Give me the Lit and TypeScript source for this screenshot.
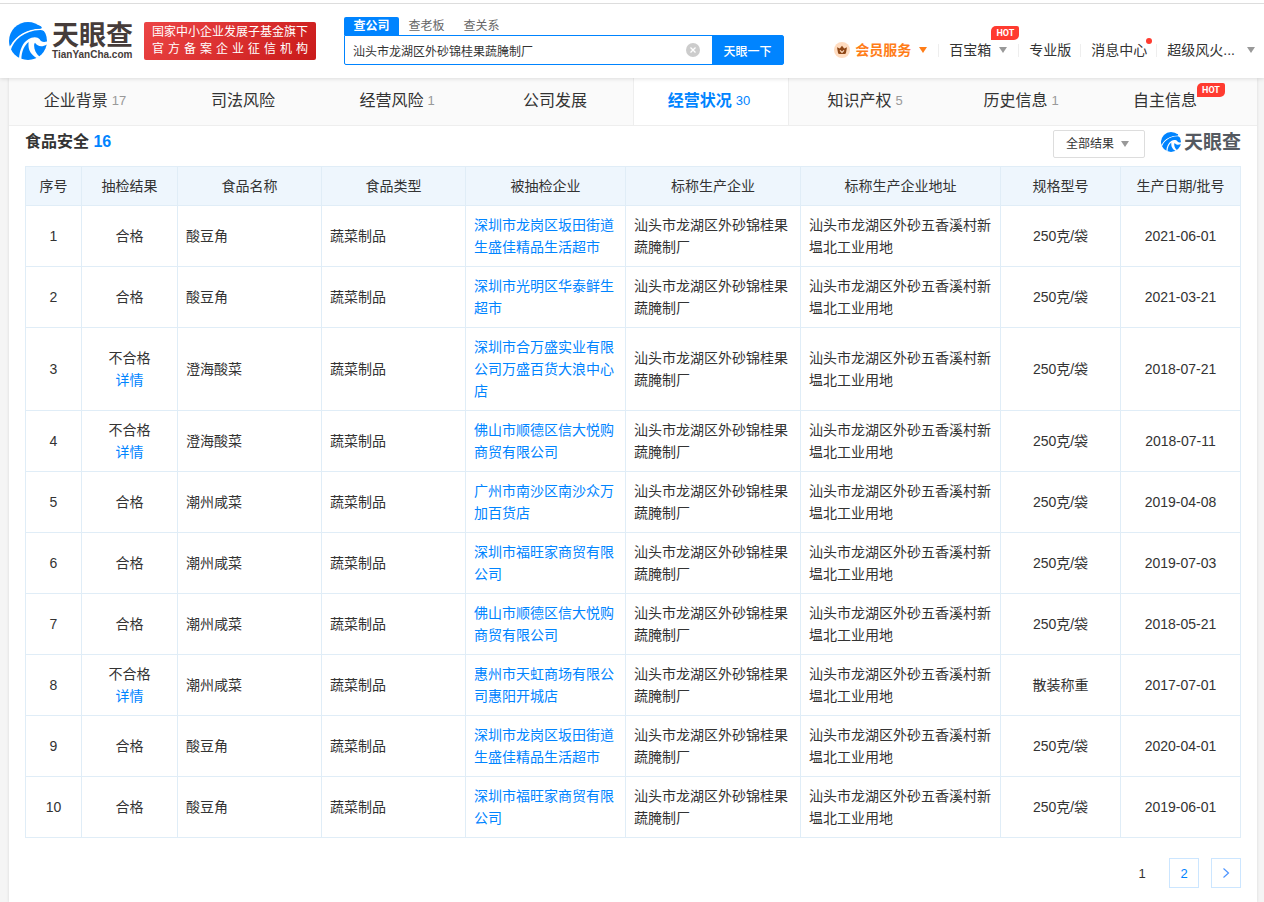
import { LitElement, html, css, svg } from "lit";
import { customElement, property, state } from "lit/decorators.js";
import { classMap } from "lit/directives/class-map.js";

const swirl = svg`
  <circle cx="57" cy="57" r="57" fill="#0084ff"></circle>
  <path d="M4 88 C14 52 46 26 94 24 C102 24 108 28 112 34 L118 30 L104 8 C104 12 102 16 98 19 C50 20 14 44 1 74 Z" fill="#fff"></path>
  <path d="M8 40 C24 14 60 0 94 12 C98 14 100 18 94 20 C54 20 20 40 4 72 C0 60 2 50 8 40 Z" fill="#0084ff"></path>
  <path d="M30 110 C32 82 42 62 58 52 C70 44 86 44 92 52 C96 60 104 62 116 58 L116 66 C100 76 86 74 78 62 C72 68 76 92 92 104 L84 109 C64 98 56 82 59 60 C46 70 38 86 37 112 Z" fill="#fff"></path>`;

interface Tab {
  label: string;
  count?: number;
  hot?: boolean;
}

const TABS: Tab[] = [
  { label: "企业背景", count: 17 },
  { label: "司法风险" },
  { label: "经营风险", count: 1 },
  { label: "公司发展" },
  { label: "经营状况", count: 30 },
  { label: "知识产权", count: 5 },
  { label: "历史信息", count: 1 },
  { label: "自主信息", hot: true },
];

const MAKER = "汕头市龙湖区外砂锦桂果蔬腌制厂";
const ADDRESS = "汕头市龙湖区外砂五香溪村新塭北工业用地";

interface Row {
  pass: boolean;
  name: string;
  company: string;
  spec: string;
  date: string;
}

const row = (pass: boolean, name: string, company: string, date: string, spec = "250克/袋"): Row => ({
  pass,
  name,
  company,
  spec,
  date,
});

const ROWS: Row[] = [
  row(true, "酸豆角", "深圳市龙岗区坂田街道生盛佳精品生活超市", "2021-06-01"),
  row(true, "酸豆角", "深圳市光明区华泰鲜生超市", "2021-03-21"),
  row(false, "澄海酸菜", "深圳市合万盛实业有限公司万盛百货大浪中心店", "2018-07-21"),
  row(false, "澄海酸菜", "佛山市顺德区信大悦购商贸有限公司", "2018-07-11"),
  row(true, "潮州咸菜", "广州市南沙区南沙众万加百货店", "2019-04-08"),
  row(true, "潮州咸菜", "深圳市福旺家商贸有限公司", "2019-07-03"),
  row(true, "潮州咸菜", "佛山市顺德区信大悦购商贸有限公司", "2018-05-21"),
  row(false, "潮州咸菜", "惠州市天虹商场有限公司惠阳开城店", "2017-07-01", "散装称重"),
  row(true, "酸豆角", "深圳市龙岗区坂田街道生盛佳精品生活超市", "2020-04-01"),
  row(true, "酸豆角", "深圳市福旺家商贸有限公司", "2019-06-01"),
];

const COLUMNS = [
  "序号",
  "抽检结果",
  "食品名称",
  "食品类型",
  "被抽检企业",
  "标称生产企业",
  "标称生产企业地址",
  "规格型号",
  "生产日期/批号",
];

const base = css`
  :host {
    display: block;
    font-family: "Liberation Sans", "Noto Sans CJK SC", sans-serif;
    color: #333;
  }
  * {
    box-sizing: border-box;
  }
  a {
    color: inherit;
    text-decoration: none;
  }
  button,
  input,
  select {
    font: inherit;
    color: inherit;
    margin: 0;
    padding: 0;
    border: 0;
    background: none;
    border-radius: 0;
  }
  button {
    cursor: pointer;
  }
`;

@customElement("brand-logo")
class BrandLogo extends LitElement {
  @property({ type: Boolean, reflect: true }) small = false;

  static styles = [
    base,
    css`
      :host {
        display: flex;
        align-items: center;
        gap: 5px;
        flex: none;
        color: #463c3a;
      }
      :host([small]) {
        gap: 3px;
        color: #555960;
      }
      .mark {
        display: block;
        width: 38px;
        height: 38px;
        flex: none;
      }
      .words {
        display: flex;
        flex-direction: column;
        align-items: flex-start;
      }
      .name {
        font-size: 27px;
        line-height: 28px;
        font-weight: 700;
        white-space: nowrap;
      }
      .domain {
        font-size: 10px;
        line-height: 10px;
        font-weight: 700;
      }
      :host([small]) .mark {
        width: 20px;
        height: 20px;
      }
      :host([small]) .name {
        padding-top: 2px;
        font-size: 19px;
        line-height: 24px;
      }
    `,
  ];

  render() {
    return html`
      <svg class="mark" viewBox="0 0 114 114" aria-hidden="true">${swirl}</svg>
      <span class="words">
        <span class="name">天眼查</span>
        ${this.small ? "" : html`<span class="domain">TianYanCha.com</span>`}
      </span>
    `;
  }
}

@customElement("site-header")
class SiteHeader extends LitElement {
  @state() private query = MAKER;

  static styles = [
    base,
    css`
      :host {
        position: relative;
        z-index: 2;
        background: #fff;
        box-shadow: 0 1px 4px rgba(0, 0, 0, 0.12);
        padding-top: 3px;
      }
      .bar {
        display: flex;
        border-top: 1px solid #ddd;
        padding: 13px 9px;
        height: 75px;
      }
      brand-logo {
        align-self: center;
      }
      .banner {
        align-self: center;
        width: 172px;
        margin: 0 28px 0 11px;
        padding: 2px 8px;
        border-radius: 2px;
        background: linear-gradient(135deg, #ec4545, #c91a1a);
        color: #fff;
        font-size: 12px;
        line-height: 17px;
        white-space: nowrap;
        text-align: justify;
        text-align-last: justify;
      }
      .banner span {
        display: block;
      }
      .search {
        width: 440px;
        font-size: 12px;
      }
      .kinds {
        display: flex;
      }
      .kind {
        width: 55px;
        height: 18px;
        line-height: 18px;
        color: #666;
        text-align: center;
      }
      .kind.on {
        background: #0084ff;
        color: #fff;
        font-weight: 700;
        border-radius: 2px 2px 0 0;
      }
      .box {
        display: flex;
        height: 30px;
        border: 1px solid #0084ff;
        border-radius: 0 2px 2px 2px;
      }
      .box input {
        flex: 1;
        min-width: 0;
        padding: 0 8px;
        outline: none;
      }
      .clear {
        display: flex;
        align-items: center;
        padding-right: 12px;
      }
      .go {
        width: 71px;
        background: #0084ff;
        color: #fff;
        font-weight: 500;
      }
      nav {
        display: flex;
        margin-left: auto;
        padding-top: 22px;
        font-size: 14px;
        line-height: 22px;
        white-space: nowrap;
      }
      .item {
        position: relative;
        display: flex;
        align-items: center;
        gap: 5px;
        height: 22px;
      }
      .item + .item {
        padding-left: 11px;
        margin-left: 9px;
      }
      .item + .item::before {
        content: "";
        position: absolute;
        left: 0;
        top: 5px;
        height: 13px;
        border-left: 1px solid #eee;
      }
      .item.menu {
        padding-right: 2px;
      }
      .vip {
        color: #ff7d18;
        font-weight: 700;
      }
      .caret {
        width: 0;
        height: 0;
        margin-left: 3px;
        border: 4px solid transparent;
        border-top: 6px solid #999;
        border-bottom: 0;
      }
      .vip .caret {
        border-top-color: #ff7d18;
      }
      .item.user {
        gap: 9px;
      }
      .hot {
        position: absolute;
        right: -10px;
        top: -13px;
      }
      .dot {
        position: absolute;
        right: -5px;
        top: -1px;
        width: 6px;
        height: 6px;
        border-radius: 50%;
        background: #ff3b30;
      }
    `,
  ];

  render() {
    return html`
      <div class="bar">
        <brand-logo></brand-logo>
        <div class="banner">
          <span>国家中小企业发展子基金旗下</span>
          <span>官方备案企业征信机构</span>
        </div>
        <form class="search" @submit=${(e: Event) => e.preventDefault()}>
          <div class="kinds">
            <button type="button" class="kind on">查公司</button>
            <button type="button" class="kind">查老板</button>
            <button type="button" class="kind">查关系</button>
          </div>
          <div class="box">
            <input
              aria-label="搜索"
              .value=${this.query}
              @input=${(e: InputEvent) => (this.query = (e.target as HTMLInputElement).value)}
            />
            <button type="button" class="clear" aria-label="清除" @click=${() => (this.query = "")}>
              <svg width="14" height="14" viewBox="0 0 14 14">
                <circle cx="7" cy="7" r="7" fill="#ccc"></circle>
                <path d="M4.5 4.5l5 5M9.5 4.5l-5 5" stroke="#fff" stroke-width="1.3"></path>
              </svg>
            </button>
            <button class="go">天眼一下</button>
          </div>
        </form>
        <nav>
          <a class="item vip menu" href="#">
            <svg width="16" height="16" viewBox="0 0 16 16" aria-hidden="true">
              <circle cx="8" cy="8" r="8" fill="#ffdcc0"></circle>
              <path d="M3 5.3l2.8 1.2L8 3.8l2.2 2.7L13 5.3l-1 5.500q-.2 1.200-1.400 1.200H5.400Q4.200 12 4 10.800z" fill="#8f4716"></path>
              <path d="M6 8.300l2 2 2-2" fill="none" stroke="#ffdcc0" stroke-width="1.200"></path>
            </svg>
            会员服务<i class="caret"></i>
          </a>
          <a class="item menu" href="#">百宝箱<i class="caret"></i><hot-badge class="hot"></hot-badge></a>
          <a class="item" href="#">专业版</a>
          <a class="item" href="#">消息中心<i class="dot"></i></a>
          <a class="item user" href="#">超级风火...<i class="caret"></i></a>
        </nav>
      </div>
    `;
  }
}

@customElement("hot-badge")
class HotBadge extends LitElement {
  static styles = [
    base,
    css`
      :host {
        display: block;
        width: 28px;
        height: 14px;
        border-radius: 5px 2px 5px 0;
        background: #ff3b30;
        color: #fff;
        font-family: Roboto, "Liberation Sans", sans-serif;
        font-size: 9px;
        font-weight: 700;
        line-height: 14px;
        text-align: center;
      }
    `,
  ];

  render() {
    return html`HOT`;
  }
}

@customElement("app-root")
class AppRoot extends LitElement {
  @state() private active = 4;

  static styles = [
    base,
    css`
      :host {
        display: flex;
        flex-direction: column;
        min-height: 100vh;
        background: #f5f5f5;
      }
      .card {
        flex: 1;
        margin: 0 7px 0 9px;
        background: #fff;
        box-shadow: 0 0 3px rgba(0, 0, 0, 0.12);
      }
      .tabs {
        display: grid;
        grid-template-columns: repeat(8, 1fr);
        height: 48px;
        background: #fafafa;
        border-bottom: 1px solid #eee;
      }
      .tab {
        display: flex;
        justify-content: center;
        align-items: center;
        padding-bottom: 2px;
        font-size: 16px;
        line-height: 24px;
        white-space: nowrap;
      }
      .tab.on {
        background: #fff;
        color: #0084ff;
        font-weight: 700;
        border: solid #eee;
        border-width: 0 1px;
      }
      .count {
        font-size: 13px;
        font-weight: 400;
        color: #999;
        margin: 0 4px;
      }
      .on .count {
        color: #0084ff;
      }
      .tab hot-badge {
        align-self: flex-start;
        margin-top: 5px;
      }
      .content {
        padding: 0 16px 14px;
      }
      .head {
        display: flex;
        align-items: flex-start;
        height: 40px;
      }
      h2 {
        margin: 4px auto 0 0;
        font-size: 16px;
        line-height: 24px;
      }
      .num,
      .link {
        color: #0084ff;
      }
      .filter {
        position: relative;
        margin: 4px 16px 0 0;
      }
      .filter select {
        display: block;
        appearance: none;
        width: 92px;
        height: 28px;
        padding-left: 12px;
        border: 1px solid #ddd;
        border-radius: 2px;
        background: #fff;
        font-size: 12px;
      }
      .filter i {
        position: absolute;
        right: 16px;
        top: 11px;
        border: 4px solid transparent;
        border-top: 6px solid #999;
        border-bottom: 0;
        pointer-events: none;
      }
      .head brand-logo {
        margin-top: 3px;
      }
      table {
        width: 100%;
        table-layout: fixed;
        border-collapse: collapse;
        font-size: 14px;
        line-height: 22px;
      }
      th,
      td {
        border: 1px solid #e0edf7;
        padding: 8px;
        font-weight: 400;
        text-align: center;
      }
      th {
        background: #eef6fd;
      }
      .left {
        text-align: left;
      }
      .result .link {
        display: block;
      }
      .c56 { width: 56px; }
      .c96 { width: 96px; }
      .c120 { width: 120px; }
      .c144 { width: 144px; }
      .c160 { width: 160px; }
      .c175 { width: 175px; }
      .c200 { width: 200px; }
      .pages {
        display: flex;
        justify-content: flex-end;
        gap: 12px;
        margin-top: 20px;
        font-size: 13px;
      }
      .page {
        display: flex;
        align-items: center;
        justify-content: center;
        width: 30px;
        height: 30px;
        border: 1px solid #cce6ff;
        color: #0084ff;
      }
      .page.current {
        border-color: transparent;
        color: #333;
      }
    `,
  ];

  private renderTab(tab: Tab, i: number) {
    return html`
      <button class=${classMap({ tab: true, on: i === this.active })} @click=${() => (this.active = i)}>
        ${tab.label}
        ${tab.count ? html`<span class="count">${tab.count}</span>` : ""}
        ${tab.hot ? html`<hot-badge></hot-badge>` : ""}
      </button>
    `;
  }

  private renderRow(r: Row, i: number) {
    return html`
      <tr>
        <td>${i + 1}</td>
        <td class="result">${r.pass ? "合格" : html`不合格<a class="link" href="#">详情</a>`}</td>
        <td class="left">${r.name}</td>
        <td class="left">蔬菜制品</td>
        <td class="left"><a class="link" href="#">${r.company}</a></td>
        <td class="left">${MAKER}</td>
        <td class="left">${ADDRESS}</td>
        <td>${r.spec}</td>
        <td>${r.date}</td>
      </tr>
    `;
  }

  render() {
    const widths = [56, 96, 144, 144, 160, 175, 200, 120, 120];
    return html`
      <site-header></site-header>
      <main class="card">
        <div class="tabs">${TABS.map((t, i) => this.renderTab(t, i))}</div>
        <section class="content">
          <div class="head">
            <h2>食品安全 <span class="num">16</span></h2>
            <div class="filter">
              <select aria-label="抽检结果">
                <option>全部结果</option>
                <option>合格</option>
                <option>不合格</option>
              </select>
              <i></i>
            </div>
            <brand-logo small></brand-logo>
          </div>
          <table>
            <colgroup>
              ${widths.map((w) => html`<col class="c${w}" />`)}
            </colgroup>
            <thead>
              <tr>
                ${COLUMNS.map((c) => html`<th scope="col">${c}</th>`)}
              </tr>
            </thead>
            <tbody>
              ${ROWS.map((r, i) => this.renderRow(r, i))}
            </tbody>
          </table>
          <div class="pages">
            <button class="page current" aria-current="page">1</button>
            <button class="page">2</button>
            <button class="page" aria-label="下一页">
              <svg width="8" height="12" viewBox="0 0 8 12" fill="none" stroke="#4d94ff" stroke-width="1.2">
                <path d="M1.5 1.5L6.5 6l-5 4.5"></path>
              </svg>
            </button>
          </div>
        </section>
      </main>
    `;
  }
}
